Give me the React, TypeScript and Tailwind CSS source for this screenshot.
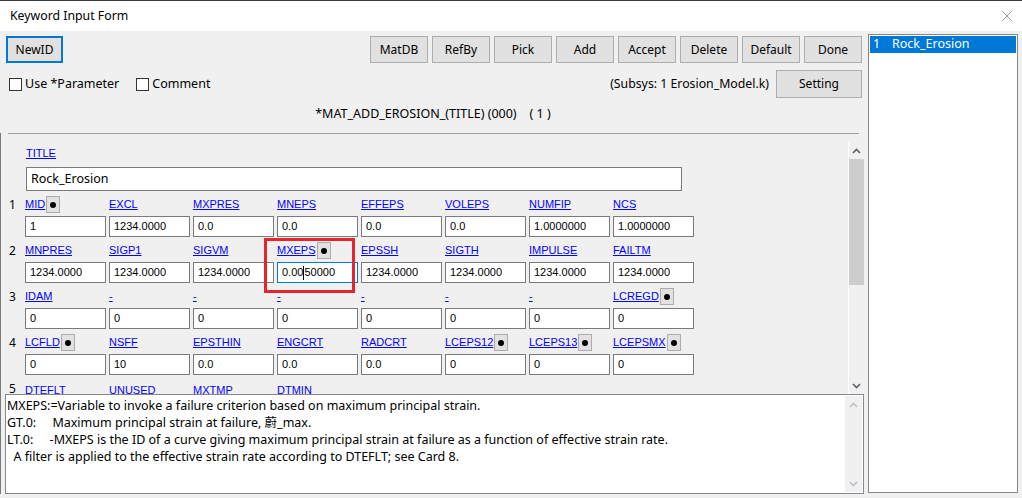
import React from "react";

type Cell = { label: string; value: string; dot?: boolean; focus?: boolean };

const ui = "font-['Noto_Sans','Noto_Sans_CJK_SC',sans-serif]";
const ms = "font-['Liberation_Sans',Arial,sans-serif]";

const rows: Cell[][] = [
  [
    { label: "MID", value: "1", dot: true },
    { label: "EXCL", value: "1234.0000" },
    { label: "MXPRES", value: "0.0" },
    { label: "MNEPS", value: "0.0" },
    { label: "EFFEPS", value: "0.0" },
    { label: "VOLEPS", value: "0.0" },
    { label: "NUMFIP", value: "1.0000000" },
    { label: "NCS", value: "1.0000000" },
  ],
  [
    { label: "MNPRES", value: "1234.0000" },
    { label: "SIGP1", value: "1234.0000" },
    { label: "SIGVM", value: "1234.0000" },
    { label: "MXEPS", value: "0.0050000", dot: true, focus: true },
    { label: "EPSSH", value: "1234.0000" },
    { label: "SIGTH", value: "1234.0000" },
    { label: "IMPULSE", value: "1234.0000" },
    { label: "FAILTM", value: "1234.0000" },
  ],
  [
    { label: "IDAM", value: "0" },
    { label: "-", value: "0" },
    { label: "-", value: "0" },
    { label: "-", value: "0" },
    { label: "-", value: "0" },
    { label: "-", value: "0" },
    { label: "-", value: "0" },
    { label: "LCREGD", value: "0", dot: true },
  ],
  [
    { label: "LCFLD", value: "0", dot: true },
    { label: "NSFF", value: "10" },
    { label: "EPSTHIN", value: "0.0" },
    { label: "ENGCRT", value: "0.0" },
    { label: "RADCRT", value: "0.0" },
    { label: "LCEPS12", value: "0", dot: true },
    { label: "LCEPS13", value: "0", dot: true },
    { label: "LCEPSMX", value: "0", dot: true },
  ],
];

// row 5 sits under the fold, only the top of its labels shows
const lastRow = ["DTEFLT", "UNUSED", "MXTMP", "DTMIN"];

function Btn({ label, w = "w-[58px]" }: { label: string; w?: string }) {
  return (
    <div className={`${w} h-[27px] bg-[#e1e1e1] border border-[#adadad] flex items-center justify-center text-[12px] text-black`}>
      {label}
    </div>
  );
}

function Dot() {
  return (
    <div className="ml-[1px] w-[14px] h-[17px] bg-[#e1e1e1] border border-[#adadad] flex items-center justify-center">
      <div className="w-[6px] h-[6px] rounded-full bg-black" />
    </div>
  );
}

function Chevron({ up, color }: { up: boolean; color: string }) {
  return (
    <svg width="9" height="6" viewBox="0 0 9 6">
      <path d={up ? "M1 5 L4.5 1.5 L8 5" : "M1 1 L4.5 4.5 L8 1"} fill="none" stroke={color} strokeWidth="1.6" />
    </svg>
  );
}

function Check({ label }: { label: string }) {
  return (
    <div className="flex items-center">
      <div className="w-[13px] h-[13px] border border-[#333] bg-white" />
      <span className="ml-[3px] text-[12.5px]">{label}</span>
    </div>
  );
}

function FormRow({ n, cells }: { n: number; cells: Cell[] }) {
  return (
    <div className="pl-[8px] mb-[4px]">
      <div className="flex h-[19px] items-center">
        <div className={`w-[16px] text-[12px] ${ui}`}>{n}</div>
        {cells.map((c, i) => (
          <div key={i} className="w-[84px] flex items-center">
            <span className="text-[#0000ff] underline text-[11px]">{c.label}</span>
            {c.dot && <Dot />}
          </div>
        ))}
      </div>
      <div className="flex pl-[16px] gap-[3px] mt-[2px]">
        {cells.map((c, i) => (
          <div
            key={i}
            className={`w-[81px] h-[21px] bg-white border flex items-center pl-[4px] text-[11px] ${c.focus ? "border-[#0078d7]" : "border-[#7a7a7a]"}`}
          >
            {c.focus ? (
              <>
                0.00
                <span className="inline-block w-px h-[14px] bg-black" />
                50000
              </>
            ) : (
              c.value
            )}
          </div>
        ))}
      </div>
    </div>
  );
}

export default function App() {
  return (
    <div className={`w-[1022px] h-[498px] bg-[#f0f0f0] overflow-hidden text-black ${ui} border-t border-[#3a3a3a]`}>
      <div className="h-[30px] bg-white flex items-center justify-between pl-[10px] pr-[9px]">
        <span className="text-[12.3px]">Keyword Input Form</span>
        <svg width="12" height="12" viewBox="0 0 12 12">
          <path d="M1 1 L11 11 M11 1 L1 11" stroke="#9a9a9a" strokeWidth="1" />
        </svg>
      </div>

      <div className="flex">
        <div className="w-[866px]">
          <div className="flex justify-between pl-[6px] pr-[4px] mt-[5px]">
            <div className="w-[57px] h-[27px] bg-[#e1e1e1] border-2 border-[#0078d7] flex items-center justify-center text-[12px]">
              NewID
            </div>
            <div className="flex gap-[4px]">
              {["MatDB", "RefBy", "Pick", "Add", "Accept", "Delete", "Default", "Done"].map((b) => (
                <Btn key={b} label={b} />
              ))}
            </div>
          </div>

          <div className="flex items-center justify-between pl-[9px] pr-[4px] mt-[7px] h-[28px]">
            <div className="flex items-center gap-[17px]">
              <Check label="Use *Parameter" />
              <Check label="Comment" />
            </div>
            <div className="flex items-center gap-[7px]">
              <span className="text-[12.3px]">(Subsys: 1 Erosion_Model.k)</span>
              <Btn label="Setting" w="w-[86px] h-[28px]" />
            </div>
          </div>

          <div className="h-[35px] pt-[8px] text-center text-[12.5px] leading-[16px] whitespace-pre">
            {"*MAT_ADD_EROSION_(TITLE) (000)    ( 1 )"}
          </div>

          <div className="border-l border-[#7a7a7a]">
            <div className="ml-[7px] w-[851px] h-px bg-[#a0a0a0]" />
            <div className="relative flex h-[260px]">
              <div className={`flex-1 overflow-hidden pt-[10px] ${ms}`}>
                <div className="pl-[25px] h-[19px] flex items-center">
                  <span className="text-[#0000ff] underline text-[11px]">TITLE</span>
                </div>
                <div className={`ml-[25px] mt-[4px] mb-[4px] w-[656px] h-[24px] bg-white border border-[#7a7a7a] flex items-center pl-[4px] text-[12.5px] ${ui}`}>
                  Rock_Erosion
                </div>
                {rows.map((r, i) => (
                  <FormRow key={i} n={i + 1} cells={r} />
                ))}
                <div className="pl-[8px] flex h-[19px] items-center">
                  <div className={`w-[16px] text-[12px] ${ui}`}>5</div>
                  {lastRow.map((l) => (
                    <div key={l} className="w-[84px]">
                      <span className="text-[#0000ff] underline text-[11px]">{l}</span>
                    </div>
                  ))}
                </div>
              </div>
              <div className="w-[16px] mt-[8px] mr-[2px] flex flex-col border-l border-white">
                <div className="h-[17px] flex items-center justify-center">
                  <Chevron up color="#606060" />
                </div>
                <div className="h-[126px] bg-[#cdcdcd]" />
                <div className="flex-1" />
                <div className="h-[17px] flex items-center justify-center">
                  <Chevron up={false} color="#606060" />
                </div>
              </div>
              <div className="absolute left-[263px] top-[104px] w-[91px] h-[55px] border-[3px] border-[#e5242b]" />
            </div>

            <div className="ml-[4px] w-[859px] h-[100px] bg-white border border-[#828790] flex">
              <div className="flex-1 pt-[2px] pl-[1px] text-[12.5px] leading-[17px] whitespace-pre">
                <div>MXEPS:=Variable to invoke a failure criterion based on maximum principal strain.</div>
                <div>{"GT.0:     Maximum principal strain at failure, 蔚_max."}</div>
                <div>{"LT.0:     -MXEPS is the ID of a curve giving maximum principal strain at failure as a function of effective strain rate."}</div>
                <div>{"  A filter is applied to the effective strain rate according to DTEFLT; see Card 8."}</div>
              </div>
              <div className="w-[17px] mr-px my-px bg-[#f0f0f0] flex flex-col justify-between">
                <div className="h-[17px] flex items-center justify-center">
                  <Chevron up color="#c0c0c0" />
                </div>
                <div className="h-[17px] flex items-center justify-center">
                  <Chevron up={false} color="#c0c0c0" />
                </div>
              </div>
            </div>
          </div>
        </div>

        <div className="ml-[2px] mt-[3px] w-[150px] h-[459px] bg-white border border-[#828790] p-px">
          <div className="h-[17px] bg-[#0078d7] text-white text-[12.5px] flex items-center pl-[3px]">
            <span className="w-[19px]">1</span>
            <span>Rock_Erosion</span>
          </div>
        </div>
      </div>
    </div>
  );
}
